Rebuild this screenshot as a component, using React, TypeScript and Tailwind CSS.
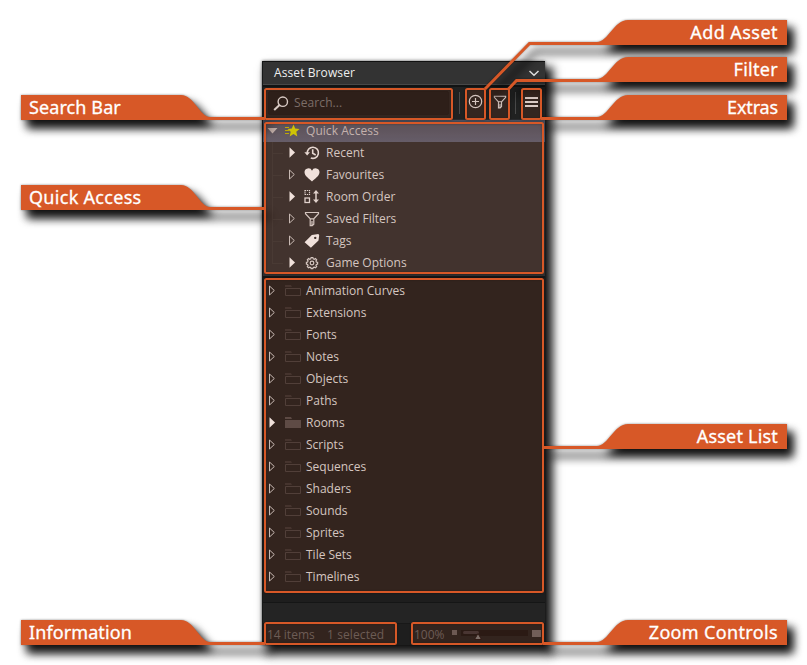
import React from 'react';

type Side = 'left' | 'right';
type Label = { text: string; side: Side; y: number; line: number; spacing: string };

const ORANGE = '#d75827';

const labels: Label[] = [
  { text: 'Add Asset', side: 'right', y: 20, line: 529, spacing: 'tracking-[0.45px]' },
  { text: 'Filter', side: 'right', y: 57, line: 516, spacing: 'tracking-[0.3px]' },
  { text: 'Extras', side: 'right', y: 95, line: 541, spacing: 'tracking-[-0.15px]' },
  { text: 'Search Bar', side: 'left', y: 95, line: 265, spacing: 'tracking-[0.1px]' },
  { text: 'Quick Access', side: 'left', y: 185, line: 265, spacing: 'tracking-[0.3px]' },
  { text: 'Asset List', side: 'right', y: 424, line: 543, spacing: 'tracking-[0.2px]' },
  { text: 'Information', side: 'left', y: 620, line: 265, spacing: 'tracking-[0.1px]' },
  { text: 'Zoom Controls', side: 'right', y: 620, line: 543, spacing: 'tracking-[0.35px]' },
];

const frames = [
  [265, 89, 187, 30],
  [466, 89, 19, 30],
  [490, 89, 19, 30],
  [522, 89, 19, 30],
  [265, 123, 278, 150],
  [265, 279, 278, 313],
  [265, 623, 131, 21],
  [412, 623, 131, 21],
];

const quick = [
  { name: 'Recent', icon: 'recent', filled: true },
  { name: 'Favourites', icon: 'heart', filled: false },
  { name: 'Room Order', icon: 'order', filled: true },
  { name: 'Saved Filters', icon: 'funnel', filled: false },
  { name: 'Tags', icon: 'tag', filled: false },
  { name: 'Game Options', icon: 'gear', filled: true },
];

const folders = [
  'Animation Curves', 'Extensions', 'Fonts', 'Notes', 'Objects', 'Paths', 'Rooms',
  'Scripts', 'Sequences', 'Shaders', 'Sounds', 'Sprites', 'Tile Sets', 'Timelines',
];

function Arrow({ filled }: { filled: boolean }) {
  return (
    <svg className="mb-px h-[11px] w-[7px] shrink-0" viewBox="0 0 7 11">
      {filled ? (
        <path d="M.5 .3 6 5.500 .5 10.700Z" fill="#fff" />
      ) : (
        <path d="M.5 1 5.300 5.500 .5 10Z" fill="none" stroke="#d0d0d0" />
      )}
    </svg>
  );
}

function Funnel({ className }: { className: string }) {
  return (
    <svg className={className} viewBox="0 0 16 16" fill="none" stroke="#dedede" strokeWidth="1.200">
      <path d="M1.500 1.500h13v1.200L9.800 7.800v5.400l-1.600 1.500h-2V7.800L1.500 2.700ZM9.800 7.800H6.200M8 14.500V10" />
    </svg>
  );
}

function Icon({ name }: { name: string }) {
  const base = 'h-4 w-4 shrink-0';
  if (name === 'recent')
    return (
      <svg className={base} viewBox="0 0 16 16" fill="none" stroke="#f4f4f4" strokeWidth="1.600">
        <path d="M3.300 8.500A5.600 5.600 0 1 1 6.800 13" />
        <path d="M.4 7.200 3.100 10.600 6 7.200Z" fill="#f4f4f4" stroke="none" />
        <path d="M8.700 4.300v4l3 1.700" />
      </svg>
    );
  if (name === 'heart')
    return (
      <svg className={base} viewBox="0 0 16 16">
        <path d="M8 14.500C5.500 12 .5 9 .5 5.300A3.900 3.900 0 0 1 8 3.700 3.900 3.900 0 0 1 15.500 5.300C15.500 9 10.500 12 8 14.500Z" fill="#fff" />
      </svg>
    );
  if (name === 'order')
    return (
      <svg className={base} viewBox="0 0 16 16" fill="none" stroke="#ececec">
        <rect x="1" y="1.500" width="4.500" height="4" strokeWidth="1.200" strokeDasharray="1.200 .8" />
        <rect x="1" y="9" width="4.500" height="4.500" strokeWidth="1.300" />
        <path d="M12 3v9" strokeWidth="1.500" />
        <path d="M9 4.500 12 1 15 4.500ZM9 10.500 12 14 15 10.500Z" fill="#ececec" stroke="none" />
      </svg>
    );
  if (name === 'funnel') return <Funnel className={base} />;
  if (name === 'tag')
    return (
      <svg className={base} viewBox="0 0 16 16">
        <path fillRule="evenodd" d="M.6 9.300 7.800 2 14.400 1l.8 1.200-.7 5.400-7.600 7.200Zm10.600-5.600a1.200 1.200 0 1 0 .1 0Z" fill="#fff" />
      </svg>
    );
  return (
    <svg className={base} viewBox="-1.300 -0.600 18.600 18.600" fill="none" stroke="#e0e0e0" strokeWidth="1.400">
      <path d="M7 2.300h2l.4 1.500 1.300.5 1.300-.8 1.400 1.400-.8 1.300.5 1.300 1.400.4v2l-1.400.4-.5 1.300.8 1.300-1.400 1.400-1.300-.8-1.300.5-.4 1.300H7l-.4-1.300-1.300-.5-1.300.8-1.400-1.400.8-1.300-.5-1.300-1.400-.4v-2l1.400-.4.5-1.300-.8-1.300L4 3.500l1.300.8 1.300-.5Z" />
      <circle cx="8" cy="8.700" r="2.100" />
    </svg>
  );
}

function Folder({ filled }: { filled: boolean }) {
  return (
    <svg className="mb-px h-[11px] w-4 shrink-0" viewBox="0 0 16 11">
      <path d="M0 0h6l1 2H0Z" fill={filled ? '#4f4b4b' : '#353232'} />
      {filled ? (
        <path d="M0 3h16v8H0Z" fill="#514d4d" />
      ) : (
        <path d="M.5 10.500V3.500h15v7Z" fill="none" stroke="#423e3e" />
      )}
    </svg>
  );
}

function AssetBrowser() {
  return (
    <section className="ml-[262px] flex h-[584px] w-[283px] flex-col border-l border-[#171919] bg-[#1e1e1e] text-[12px] text-[#dfdfdf] shadow-[6px_8px_9px_2px_rgba(0,0,0,0.9),0_0_3px_rgba(0,0,0,0.6)]">
      <header className="flex h-6 shrink-0 items-center justify-between border-t border-b border-t-[#111] border-b-[#484848] bg-[#333] pr-[5px] pl-[11px]">
        <span className="whitespace-nowrap tracking-[0.1px] text-[#eee]">Asset Browser</span>
        <svg className="h-3 w-3" viewBox="0 0 12 12" fill="none" stroke="#ddd" strokeWidth="1.500"><path d="M1.500 4 6 8.300 10.500 4" /></svg>
      </header>
      <div className="flex h-[35px] shrink-0 items-center border-t-2 border-b border-t-[#121414] border-b-[#292a2d] bg-[#202121]">
        <div className="ml-[5px] flex h-6 w-[181px] items-center rounded-[2px] border border-[#171717] bg-[#191919] pl-1">
          <svg className="h-[15px] w-4" viewBox="0 0 16 15" fill="none" stroke="#e4e4e4" strokeWidth="1.400"><circle cx="9.800" cy="5.700" r="4.700" /><path d="M6.500 9 1.200 14" strokeWidth="2" /></svg>
          <span className="ml-[5px] tracking-[0.1px] text-[#757575]">Search...</span>
        </div>
        <i className="ml-[10px] h-[22px] w-px bg-[#4a4a4a]" />
        <svg className="mb-[3px] ml-2 h-[15px] w-[15px]" viewBox="0 0 15 15" fill="none" stroke="#ddd" strokeWidth="1.200"><circle cx="7.500" cy="7.500" r="6.200" /><path d="M7.500 4v7M4 7.500h7" /></svg>
        <Funnel className="mb-[3px] ml-[10px] h-[14px] w-[14px]" />
        <i className="ml-2 h-[22px] w-px bg-[#4a4a4a]" />
        <div className="mb-[3px] ml-[9px] flex w-[13px] flex-col gap-[2px]">
          <i className="h-[2px] bg-[#e5e5e5]" /><i className="h-[2px] bg-[#e5e5e5]" /><i className="h-[2px] bg-[#e5e5e5]" />
        </div>
      </div>
      <div className="h-[156px] shrink-0 bg-[#303031]">
        <div className="flex h-[22px] items-center bg-linear-to-b from-[#4d515f] to-[#5b6277] pl-1">
          <svg className="mb-px h-[6px] w-[11px]" viewBox="0 0 11 6"><path d="M.5 0h10L5.500 5.500Z" fill="#c9c4c4" /></svg>
          <svg className="ml-[6px] h-[14px] w-[17px]" viewBox="0 0 17 14">
            <path d="m9.500 .5 1.700 4 4.300.4-3.200 2.800 1 4.800-3.800-2.500-3.800 2.500 1-4.800-3.200-2.800 4.300-.4Z" fill="#d8dc00" />
            <path d="M1 3.500h4M1 6.500h4M1 9.500h4" stroke="#c4bd00" />
          </svg>
          <span className="ml-[5px] tracking-[0.05px] text-[#cac5c7]">Quick Access</span>
        </div>
        <div className="relative">
          <i className="absolute top-0 left-[9px] h-[121px] w-px bg-[#393939]" />
          {quick.map((q) => (
            <div key={q.name} className="flex h-[22px] items-center pl-[9px]">
              <i className="mr-[6px] h-px w-[11px] bg-[#393939]" />
              <Arrow filled={q.filled} />
              <span className="mr-[3px] ml-[6px] flex w-5 justify-center"><Icon name={q.icon} /></span>
              <span className="ml-px">{q.name}</span>
            </div>
          ))}
        </div>
      </div>
      <div className="h-[327px] shrink-0 border-t-2 border-b border-t-[#151616] border-b-[#151616] pt-[2px]">
        {folders.map((name) => (
          <div key={name} className="flex h-[22px] items-center pl-[6px]">
            <Arrow filled={name === 'Rooms'} />
            <span className="mr-[5px] ml-[9px] flex"><Folder filled={name === 'Rooms'} /></span>
            {name}
          </div>
        ))}
      </div>
      <div className="h-[21px] shrink-0 border-b border-[#181818] bg-[#242424]" />
      <footer className="flex flex-1 items-center pl-[4px] text-[#646160]">
        <span className="w-[60px]">14 items</span>
        <span className="w-[87px] tracking-[0.1px]">1 selected</span>
        <span className="w-[38px]">100%</span>
        <i className="mb-1 h-[5px] w-[5px] bg-[#625e5e]" />
        <span className="relative mb-[3px] ml-1 block h-[6px] w-[67px] bg-[#151313]">
          <i className="absolute top-px left-[2px] h-[3px] w-4 rounded bg-[#393336]" />
          <svg className="absolute top-[3px] left-[13px] h-[7px] w-[8px]" viewBox="0 0 8 7"><path d="M4 .5 7.500 6.500h-7Z" fill="#777" stroke="#1c1515" /></svg>
        </span>
        <i className="mb-[2px] ml-1 h-[7px] w-[9px] bg-[#686363]" />
      </footer>
    </section>
  );
}

function callout({ side, y, line }: Label) {
  const b = y + 25;
  return side === 'left'
    ? `M21 ${y}H181C194 ${y} 200 ${b - 3} 210 ${b - 3}H${line}V${b}H21Z`
    : `M787 ${y}H628C614 ${y} 608 ${b - 3} 597 ${b - 3}H${line}V${b}H787Z`;
}

export default function App() {
  return (
    <main className="relative h-[665px] w-[807px] overflow-hidden bg-white pt-[61px] font-['Open_Sans','Noto_Sans',sans-serif]">
      <AssetBrowser />
      <svg className="pointer-events-none absolute inset-0 h-full w-full drop-shadow-[0_0_1px_rgba(0,0,0,0.4)]" viewBox="0 0 807 665">
        <g className="drop-shadow-[6px_8px_5px_rgba(0,0,0,0.9)]">
          {labels.map((l) => <path key={l.text} d={callout(l)} fill={ORANGE} />)}
          <path d="M531 43.500H529.500L485 89M519 80.500H516.500L508.500 89" fill="none" stroke={ORANGE} strokeWidth="3" />
        </g>
        {frames.map(([x, y, w, h]) => (
          <rect key={`${x}-${y}`} x={x} y={y} width={w} height={h} rx="1.500" fill={ORANGE} fillOpacity=".12" stroke={ORANGE} strokeWidth="2" />
        ))}
      </svg>
      {labels.map((l) => (
        <span
          key={l.text}
          className={`absolute font-['Noto_Sans',sans-serif] text-[18px] leading-6 font-normal whitespace-nowrap text-white [-webkit-text-stroke:0.3px_white] ${l.spacing} ${l.side === 'left' ? 'left-[29px]' : 'right-[29px]'}`}
          style={{ top: l.y }}
        >
          {l.text}
        </span>
      ))}
    </main>
  );
}
